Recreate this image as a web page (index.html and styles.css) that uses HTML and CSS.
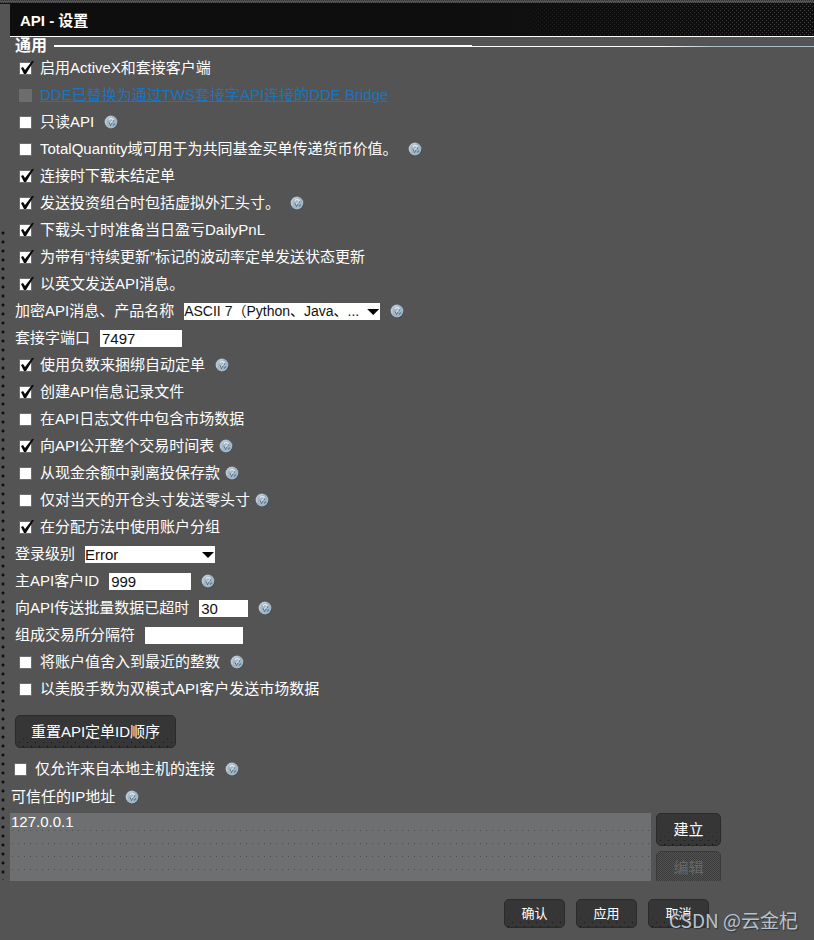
FILE: index.html
```
<!DOCTYPE html>
<html lang="zh-CN">
<head>
<meta charset="utf-8">
<meta name="viewport" content="width=device-width, initial-scale=1">
<title>API - 设置</title>
<link rel="stylesheet" href="styles.css">
</head>
<body>
<svg class="defs" aria-hidden="true">
  <symbol id="help" viewBox="0 0 14 14">
    <circle cx="7.4" cy="7.5" r="6.4" fill="#3c434a"/>
    <circle cx="7" cy="7" r="6.4" fill="#a3b6c4"/>
    <path d="M2.5 9.5A5 5 0 0 1 8 2" fill="none" stroke="#bccbd6" stroke-width="1.5"/>
    <path d="M5 5.2Q5.2 3.5 7.2 3.5Q9.5 3.6 9.3 5.4Q9 6.5 7.3 7.2L6.6 8.6" fill="none" stroke="#e6edf2" stroke-width="1.2"/>
    <path d="M5 7.4L6 9.5M8.3 7.4L6.2 11M9.8 5.2L9 7" fill="none" stroke="#596f80" stroke-width="1"/>
    <path d="M9 10.5L11 8.5" stroke="#4d86b5" stroke-width="1.4"/>
  </symbol>
</svg>
<main class="window">
  <div class="grip"></div>
  <form class="panel">
    <h1 class="title">API - 设置</h1>
    <fieldset class="group">
      <div class="section"><h2>通用</h2><span class="rule"></span></div>
      <div class="row"><label class="check"><input type="checkbox" checked><span>启用ActiveX和套接客户端</span></label></div>
      <div class="row"><input type="checkbox" disabled aria-labelledby="dde"><a id="dde" href="#dde">DDE已替换为通过TWS套接字API连接的DDE Bridge</a></div>
      <div class="row"><label class="check"><input type="checkbox"><span>只读API</span></label><svg class="help"><use href="#help"/></svg></div>
      <div class="row"><label class="check"><input type="checkbox"><span>TotalQuantity域可用于为共同基金买单传递货币价值。</span></label><svg class="help"><use href="#help"/></svg></div>
      <div class="row"><label class="check"><input type="checkbox" checked><span>连接时下载未结定单</span></label></div>
      <div class="row"><label class="check"><input type="checkbox" checked><span>发送投资组合时包括虚拟外汇头寸。</span></label><svg class="help"><use href="#help"/></svg></div>
      <div class="row"><label class="check"><input type="checkbox" checked><span>下载头寸时准备当日盈亏DailyPnL</span></label></div>
      <div class="row"><label class="check"><input type="checkbox" checked><span>为带有“持续更新”标记的波动率定单发送状态更新</span></label></div>
      <div class="row"><label class="check"><input type="checkbox" checked><span>以英文发送API消息。</span></label></div>
      <div class="row field"><label for="encoding">加密API消息、产品名称</label><span class="drop wide"><select id="encoding"><option>ASCII 7（Python、Java、...</option></select></span><svg class="help"><use href="#help"/></svg></div>
      <div class="row field"><label for="port">套接字端口</label><input class="medium" id="port" type="text" value="7497"></div>
      <div class="row"><label class="check"><input type="checkbox" checked><span>使用负数来捆绑自动定单</span></label><svg class="help"><use href="#help"/></svg></div>
      <div class="row"><label class="check"><input type="checkbox" checked><span>创建API信息记录文件</span></label></div>
      <div class="row"><label class="check"><input type="checkbox"><span>在API日志文件中包含市场数据</span></label></div>
      <div class="row tight"><label class="check"><input type="checkbox" checked><span>向API公开整个交易时间表</span></label><svg class="help"><use href="#help"/></svg></div>
      <div class="row tight"><label class="check"><input type="checkbox"><span>从现金余额中剥离投保存款</span></label><svg class="help"><use href="#help"/></svg></div>
      <div class="row tight"><label class="check"><input type="checkbox"><span>仅对当天的开仓头寸发送零头寸</span></label><svg class="help"><use href="#help"/></svg></div>
      <div class="row"><label class="check"><input type="checkbox" checked><span>在分配方法中使用账户分组</span></label></div>
      <div class="row field"><label for="level">登录级别</label><span class="drop"><select id="level"><option>Error</option></select></span></div>
      <div class="row field"><label for="master">主API客户ID</label><input class="medium" id="master" type="text" value="999"><svg class="help"><use href="#help"/></svg></div>
      <div class="row field"><label for="timeout">向API传送批量数据已超时</label><input class="small" id="timeout" type="text" value="30"><svg class="help"><use href="#help"/></svg></div>
      <div class="row field"><label for="separator">组成交易所分隔符</label><input class="large" id="separator" type="text"></div>
      <div class="row"><label class="check"><input type="checkbox"><span>将账户值舍入到最近的整数</span></label><svg class="help"><use href="#help"/></svg></div>
      <div class="row"><label class="check"><input type="checkbox"><span>以美股手数为双模式API客户发送市场数据</span></label></div>
      <button class="button reset" type="button">重置API定单ID顺序</button>
    </fieldset>
    <section class="trusted">
      <div class="row"><label class="check"><input type="checkbox"><span>仅允许来自本地主机的连接</span></label><svg class="help"><use href="#help"/></svg></div>
      <div class="row address"><label for="hosts">可信任的IP地址</label><svg class="help"><use href="#help"/></svg></div>
      <div class="hosts">
        <textarea id="hosts" readonly>127.0.0.1</textarea>
        <div class="actions">
          <button class="button" type="button">建立</button>
          <button class="button" type="button" disabled>编辑</button>
        </div>
      </div>
    </section>
    <footer class="footer">
      <button class="button" type="submit">确认</button>
      <button class="button" type="button">应用</button>
      <button class="button" type="button">取消</button>
      <span class="mark">CSDN @云金杞</span>
    </footer>
  </form>
</main>
</body>
</html>
```
FILE: styles.css
```
* { box-sizing: border-box; }

body {
  margin: 0;
  min-height: 100vh;
  background: #545454;
  color: #fff;
  font: 15px/18px "Liberation Sans", "Noto Sans CJK SC", sans-serif;
}

input, select, textarea, button { font: inherit; margin: 0; border-radius: 0; }

.defs { display: none; }

.window {
  display: grid;
  grid-template-columns: 10px minmax(0, 1fr);
  padding-top: 3px;
  background: repeating-conic-gradient(#333 0 25%, #545454 0 50%) 0 0 / 2px 3px repeat-x;
}

.grip {
  border-top: 1px solid #111;
  margin-bottom: 60px;
  background: radial-gradient(circle at 3px 4px, #111 1px, transparent 2px) 0 0 / 10px 9px;
  background-clip: content-box;
  padding-top: 222px;
}

/* Single-pixel dither dots that thicken to the right. */
.title {
  display: flex;
  align-items: center;
  height: 34px;
  margin: 0;
  padding: 2px 0 0 10px;
  border-bottom: 1px solid #fff;
  background:
    linear-gradient(90deg, #0e0e0e 55%, transparent),
    conic-gradient(from 270deg at 1px 1px, #484848 90deg, transparent 0) 0 1px / 4px 4px,
    conic-gradient(from 270deg at 1px 1px, #484848 90deg, transparent 0) 2px 3px / 4px 4px,
    #0e0e0e;
  font-size: 15px;
}

.group { margin: 0; padding: 0 0 0 5px; border: 0; min-width: 0; }

.section { display: flex; align-items: center; gap: 7px; height: 18px; }

.section h2 { margin: 0; font-size: 16px; }

.rule {
  flex: 1;
  height: 2px;
  background:
    linear-gradient(#fff, #fff) 0 0 / 55% 2px no-repeat,
    linear-gradient(90deg, #fff 80%, #a9bac4 87%) 0 1px / 100% 1px no-repeat;
}

.row { display: flex; align-items: center; gap: 10px; height: 27px; padding: 0 0 2px 4px; white-space: nowrap; }

.row.field { padding-left: 0; }

.row.address { padding: 0 0 0 1px; }

.row.tight { gap: 5px; }

.check { display: flex; align-items: center; gap: 8px; }

.row > a { margin-left: -2px; color: #1b74bd; text-decoration: underline; }

input[type="checkbox"] {
  appearance: none;
  flex: none;
  position: relative;
  width: 13px;
  height: 13px;
  margin-top: 2px;
  border: 1px solid #6b6d6f;
  background: #fff;
}

input[type="checkbox"]:checked::after {
  content: "";
  position: absolute;
  left: 0;
  top: -2px;
  width: 14px;
  height: 14px;
  background: #0a0a0a;
  clip-path: polygon(1px 7px, 3px 6px, 5px 9px, 12px 0, 14px 0, 6px 13px, 4px 13px);
}

input[type="checkbox"]:disabled { background: #6d6d6d; }

.help { flex: none; width: 14px; height: 14px; }

input[type="text"], select {
  appearance: none;
  height: 17px;
  padding: 0 2px;
  border: 0;
  background: #fff;
  color: #111;
  line-height: 17px;
}

input[type="text"], .drop { margin-top: 2px; }

.small { width: 49px; }
.medium { width: 82px; }
.large { width: 98px; }

.drop { position: relative; display: flex; width: 130px; }

.drop.wide { width: 196px; font-size: 14px; }

.drop select { width: 100%; padding: 0; }

.drop::after {
  content: "";
  position: absolute;
  right: 1px;
  top: 6px;
  width: 12px;
  height: 6px;
  background: #000;
  clip-path: polygon(0 0, 100% 0, 50% 100%);
  pointer-events: none;
}

.button {
  height: 33px;
  padding: 0;
  border: 1px solid #2a2a2a;
  border-radius: 5px;
  background:
    linear-gradient(#363636 45%, transparent),
    conic-gradient(from 270deg at 1px 1px, #0c0c0c 90deg, transparent 0) 3px 2px / 8px 8px,
    conic-gradient(from 270deg at 1px 1px, #0c0c0c 90deg, transparent 0) 7px 6px / 8px 8px,
    #363636;
  color: #fff;
}

.reset { display: block; width: 161px; margin: 12px 0 8px; }

.hosts { display: flex; gap: 5px; height: 68px; margin: 3px 93px 0 0; }

.hosts textarea {
  flex: 1;
  min-width: 0;
  padding: 0 1px;
  border: 0;
  resize: none;
  outline: 0;
  background:
    linear-gradient(#6d6f71, #6d6f71) 0 0 / 100% 12px no-repeat,
    conic-gradient(from 270deg at 1px 1px, #4c4e4f 90deg, transparent 0) 2px 17px / 6px 13px,
    #6d6f71;
  color: #fff;
  line-height: 17px;
}

.actions { display: flex; flex-direction: column; gap: 5px; width: 65px; overflow: hidden; }

.actions .button { flex: none; }

.button:disabled {
  border-color: #3a3a3a;
  background: repeating-conic-gradient(#3b3b3b 0 25%, #525252 0 50%) 0 0 / 2px 2px;
  color: #686868;
}

.footer { position: relative; display: flex; justify-content: flex-end; gap: 11px; margin-top: 18px; padding: 0 105px 12px 0; }

.footer .button { width: 61px; height: 29px; font-size: 13px; }

.mark {
  position: absolute;
  right: 16px;
  top: 9px;
  color: #b5c4d0;
  font-family: "Noto Sans CJK SC", sans-serif;
  font-size: 19px;
  line-height: 24px;
  text-shadow: 1px 1px 1px #333;
}
```
